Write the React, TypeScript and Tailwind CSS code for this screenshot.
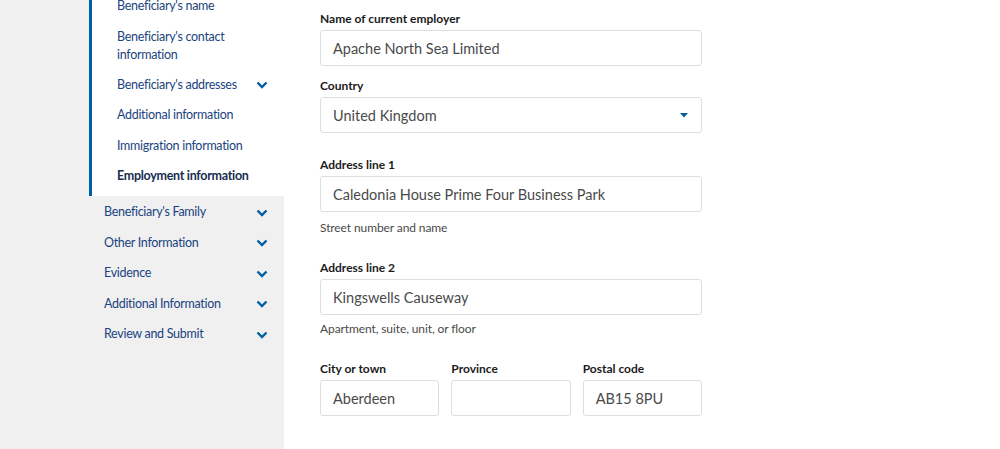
import React from "react";

const font = { fontFamily: "Lato, 'Noto Sans', sans-serif" };

const Chevron = () => (
  <svg width="12" height="8" viewBox="0 0 12 8" className="shrink-0">
    <polyline points="1.5,1.5 6,6 10.5,1.5" fill="none" stroke="#005ea2" strokeWidth="2.4" />
  </svg>
);

const subItems: { label: string; chevron?: boolean; current?: boolean; tall?: boolean }[] = [
  { label: "Beneficiary's name" },
  { label: "Beneficiary's contact information", tall: true },
  { label: "Beneficiary's addresses", chevron: true },
  { label: "Additional information" },
  { label: "Immigration information" },
  { label: "Employment information", current: true },
];

const sections = ["Beneficiary's Family", "Other Information", "Evidence", "Additional Information", "Review and Submit"];

const Label = ({ children, className = "" }: { children: React.ReactNode; className?: string }) => (
  <div className={`text-[12px] font-bold leading-[18px] text-[#1b1b1b] ${className}`}>{children}</div>
);

const Input = ({ value, className = "" }: { value?: string; className?: string }) => (
  <div className={`h-9 border border-[#dcdee0] rounded-[3px] bg-white flex items-center px-3 pt-[2px] text-[14.5px] text-[#4a4a4a] ${className}`}>
    {value}
  </div>
);

const Hint = ({ children, className = "" }: { children: React.ReactNode; className?: string }) => (
  <div className={`text-[12px] tracking-[-0.1px] leading-4 text-[#4a4a4a] ${className}`}>{children}</div>
);

export default function App() {
  return (
    <div className="flex w-[1000px] h-[449px] overflow-hidden bg-white" style={font}>
      {/* Side navigation */}
      <aside className="w-[284px] shrink-0 bg-[#f0f0f0] h-full">
        <div className="ml-[89px] -mt-[9px] bg-white border-l-[3px] border-[#005ea2] pb-[4px]">
          {subItems.map((it) => (
            <div
              key={it.label}
              className={`flex items-center justify-between pl-[25px] pr-4 text-[12.5px] tracking-[-0.3px] leading-[18px] ${
                it.tall ? "py-[6px]" : "h-[30.5px]"
              } ${it.current ? "font-bold text-[#162e51]" : "text-[#1a4480]"}`}
            >
              <span className={it.tall ? "w-[115px]" : ""}>{it.label}</span>
              {it.chevron && <Chevron />}
            </div>
          ))}
        </div>
        <div className="pl-[104px] pt-[2px]">
          {sections.map((s) => (
            <div key={s} className="h-[30.5px] flex items-center justify-between pr-4 text-[12.5px] tracking-[-0.3px] text-[#1a4480]">
              <span>{s}</span>
              <Chevron />
            </div>
          ))}
        </div>
      </aside>

      {/* Form */}
      <main className="pl-9 pt-[10px]">
        <div className="w-[382px]">
          <Label>Name of current employer</Label>
          <Input value="Apache North Sea Limited" className="mt-[2px]" />

          <Label className="mt-[11px]">Country</Label>
          <div className="mt-[2px] h-9 border border-[#dcdee0] rounded-[3px] flex items-center justify-between pl-3 pr-[13px] text-[14.5px] text-[#4a4a4a]">
            <span className="pt-[2px]">United Kingdom</span>
            <svg width="8" height="5" viewBox="0 0 8 5">
              <polygon points="0,0 8,0 4,4.5" fill="#005ea2" />
            </svg>
          </div>

          <Label className="mt-[23px]">Address line 1</Label>
          <Input value="Caledonia House Prime Four Business Park" className="mt-[2px]" />
          <Hint className="mt-2">Street number and name</Hint>

          <Label className="mt-[23px]">Address line 2</Label>
          <Input value="Kingswells Causeway" className="mt-[2px]" />
          <Hint className="mt-[6px]">Apartment, suite, unit, or floor</Hint>

          <div className="grid grid-cols-3 gap-3 mt-[23px]">
            <div>
              <Label>City or town</Label>
              <Input value="Aberdeen" className="mt-[2px]" />
            </div>
            <div>
              <Label>Province</Label>
              <Input className="mt-[2px]" />
            </div>
            <div>
              <Label>Postal code</Label>
              <Input value="AB15 8PU" className="mt-[2px]" />
            </div>
          </div>
        </div>
      </main>
    </div>
  );
}
